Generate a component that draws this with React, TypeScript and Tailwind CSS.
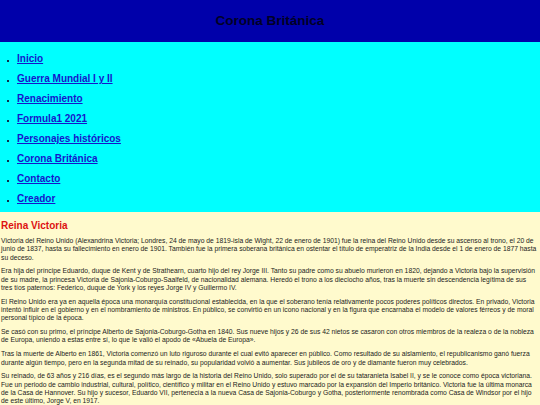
const links = [
  'Inicio',
  'Guerra Mundial I y II',
  'Renacimiento',
  'Formula1 2021',
  'Personajes históricos',
  'Corona Británica',
  'Contacto',
  'Creador',
];

const paragraphs = [
  'Victoria del Reino Unido (Alexandrina Victoria; Londres, 24 de mayo de 1819-isla de Wight, 22 de enero de 1901) fue la reina del Reino Unido desde su ascenso al trono, el 20 de junio de 1837, hasta su fallecimiento en enero de 1901. También fue la primera soberana británica en ostentar el título de emperatriz de la India desde el 1 de enero de 1877 hasta su deceso.',
  'Era hija del príncipe Eduardo, duque de Kent y de Strathearn, cuarto hijo del rey Jorge III. Tanto su padre como su abuelo murieron en 1820, dejando a Victoria bajo la supervisión de su madre, la princesa Victoria de Sajonia-Coburgo-Saalfeld, de nacionalidad alemana. Heredó el trono a los dieciocho años, tras la muerte sin descendencia legítima de sus tres tíos paternos: Federico, duque de York y los reyes Jorge IV y Guillermo IV.',
  'El Reino Unido era ya en aquella época una monarquía constitucional establecida, en la que el soberano tenía relativamente pocos poderes políticos directos. En privado, Victoria intentó influir en el gobierno y en el nombramiento de ministros. En público, se convirtió en un icono nacional y en la figura que encarnaba el modelo de valores férreos y de moral personal típico de la época.',
  'Se casó con su primo, el príncipe Alberto de Sajonia-Coburgo-Gotha en 1840. Sus nueve hijos y 26 de sus 42 nietos se casaron con otros miembros de la realeza o de la nobleza de Europa, uniendo a estas entre sí, lo que le valió el apodo de «Abuela de Europa».',
  'Tras la muerte de Alberto en 1861, Victoria comenzó un luto riguroso durante el cual evitó aparecer en público. Como resultado de su aislamiento, el republicanismo ganó fuerza durante algún tiempo, pero en la segunda mitad de su reinado, su popularidad volvió a aumentar. Sus jubileos de oro y de diamante fueron muy celebrados.',
  'Su reinado, de 63 años y 216 días, es el segundo más largo de la historia del Reino Unido, solo superado por el de su tataranieta Isabel II, y se le conoce como época victoriana. Fue un periodo de cambio industrial, cultural, político, científico y militar en el Reino Unido y estuvo marcado por la expansión del Imperio británico. Victoria fue la última monarca de la Casa de Hannover. Su hijo y sucesor, Eduardo VII, pertenecía a la nueva Casa de Sajonia-Coburgo y Gotha, posteriormente renombrada como Casa de Windsor por el hijo de este último, Jorge V, en 1917.',
];

export default function App() {
  return (
    <div className="min-h-[405px] bg-[#fffacd] font-['Liberation_Sans',Arial,sans-serif]">
      {/* Header */}
      <header className="h-[42px] bg-[#0000aa] flex items-center justify-center">
        <h1 className="text-[13.5px] font-bold text-[#000025]">Corona Británica</h1>
      </header>

      {/* Nav */}
      <nav className="bg-[#00ffff] py-[5px]">
        <ul className="list-[square] pl-[17px] marker:text-[6px] marker:text-[#0b2d4a]">
          {links.map((l) => (
            <li key={l} className="h-5 leading-5">
              <a href="#" className="text-[10px] font-bold text-[#1515cc] underline">
                {l}
              </a>
            </li>
          ))}
        </ul>
      </nav>

      {/* Content */}
      <main className="pl-px pr-[2px] pt-[8px] pb-2">
        <h2 className="text-[10px] font-bold text-[#dd1111] leading-[12px] mb-[5px]">Reina Victoria</h2>
        {paragraphs.map((p, i) => (
          <p key={i} className="text-[6.75px] leading-[8.3px] text-[#1c1c1c] mb-[5.5px]">
            {p}
          </p>
        ))}
      </main>
    </div>
  );
}
